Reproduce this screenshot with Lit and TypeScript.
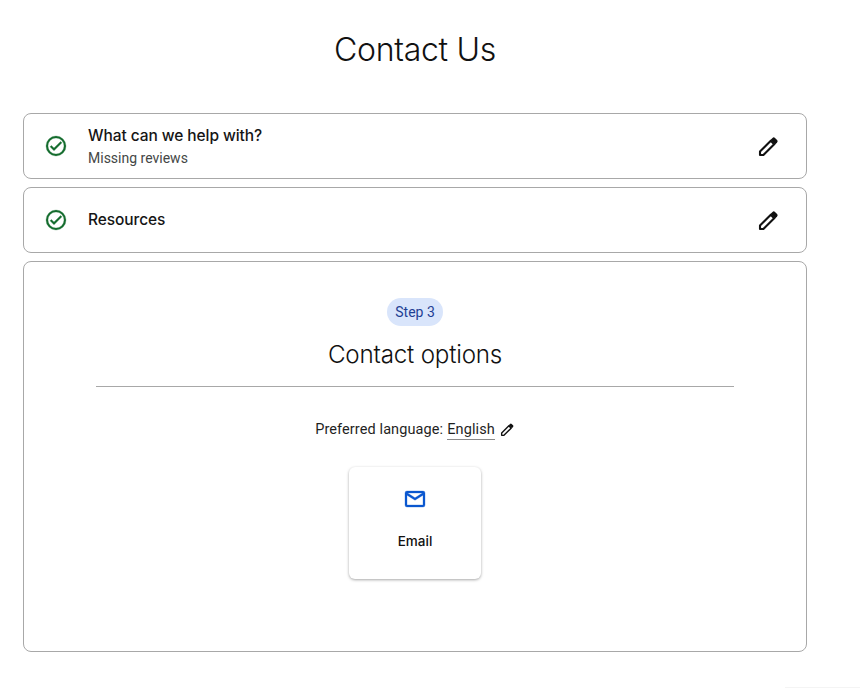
import { LitElement, html, css, svg } from "lit";
import { customElement } from "lit/decorators.js";

const check = svg`<path d="M12 2a10 10 0 1 0 0 20 10 10 0 0 0 0-20zm0 18a8 8 0 1 1 0-16 8 8 0 0 1 0 16zm4.6-12.6L10 14l-2.6-2.6L6 12.8l4 4 8-8z" fill="#146c2e" stroke="#146c2e" stroke-width=".25"/>`;
const pencil = svg`<path d="M4 20v-3.4L14.8 5.8l3.4 3.4L7.4 20z" fill="none" stroke="#111" stroke-width="2.1" stroke-linejoin="round"/><path d="M14.6 4.8l1.9-1.9a1.8 1.8 0 0 1 2.5 0l2.1 2.1a1.8 1.8 0 0 1 0 2.5L19.2 9.4z" fill="#111"/>`;
const mail = svg`<path d="M20 4H4a2 2 0 0 0-2 2v12a2 2 0 0 0 2 2h16a2 2 0 0 0 2-2V6a2 2 0 0 0-2-2zm0 14H4V8.2l8 5 8-5V18zm-8-7.2L4.6 6h14.8L12 10.8z" fill="#0b57d0" stroke="#0b57d0" stroke-width=".3"/>`;

@customElement("app-root")
export class AppRoot extends LitElement {
  static styles = css`
    :host { display: block; position: relative; width: 860px; height: 688px; background: #fff; font-family: Roboto, "Liberation Sans", sans-serif; color: #1f1f1f; overflow: hidden; }
    :host::after { content: ""; position: absolute; left: 785px; right: 0; bottom: 0; height: 1px; background: #f4f4f4; }
    .page { width: 784px; margin-left: 23px; display: flex; flex-direction: column; }
    h1 { margin: 0; height: 113px; padding-top: 31px; box-sizing: border-box; text-align: center; font-family: Inter, Roboto, sans-serif; font-weight: 300; font-size: 32px; line-height: 38px; letter-spacing: -0.3px; color: #111; }
    .card { border: 1px solid #a8a8a8; border-radius: 8px; box-sizing: border-box; }
    .row { height: 66px; margin-bottom: 8px; display: flex; align-items: center; padding: 0 26px 0 20px; }
    .row svg.ok { width: 24px; height: 24px; flex: none; }
    .row .text { flex: 1; margin-left: 20px; display: flex; flex-direction: column; }
    .row .text.two { padding-top: 1px; }
    .title { font-family: Inter, Roboto, sans-serif; font-size: 15.5px; font-weight: 500; line-height: 22px; letter-spacing: -0.08px; color: #151515; }
    .sub { font-size: 14px; line-height: 22px; color: #444746; }
    .row svg.edit { width: 24px; height: 24px; flex: none; margin-top: 2px; }
    .main { height: 391px; display: flex; flex-direction: column; align-items: center; padding-top: 36px; }
    .chip { height: 28px; padding: 0 8px; border-radius: 14px; background: #d9e5fb; color: #1f3f94; font-size: 14px; line-height: 28px; }
    h2 { margin: 11px 0 0; font-family: Inter, Roboto, sans-serif; font-weight: 300; font-size: 24.2px; line-height: 36px; letter-spacing: -0.2px; color: #111; }
    .rule { width: 638px; height: 1px; background: #a8a8a8; margin-top: 13px; }
    .lang { margin-top: 33px; display: flex; align-items: center; font-size: 14.5px; line-height: 20px; letter-spacing: 0.1px; }
    .lang u { text-decoration: none; border-bottom: 1px solid #8a8a8a; margin-left: 4px; line-height: 19px; }
    .lang svg { width: 16px; height: 16px; margin-left: 4px; }
    .tile { width: 132px; height: 112px; margin-top: 27px; border-radius: 6px; box-shadow: 0 1px 3px rgba(0,0,0,.35); display: flex; flex-direction: column; align-items: center; padding-top: 20px; box-sizing: border-box; }
    .tile svg { width: 24px; height: 24px; }
    .tile span { margin-top: 19px; font-family: Inter, Roboto, sans-serif; font-size: 13.5px; font-weight: 500; line-height: 22px; color: #111; }
  `;

  render() {
    return html`<div class="page">
      <h1>Contact Us</h1>
      <div class="card row">
        <svg class="ok" viewBox="0 0 24 24">${check}</svg>
        <div class="text two"><span class="title">What can we help with?</span><span class="sub">Missing reviews</span></div>
        <svg class="edit" viewBox="0 0 24 24">${pencil}</svg>
      </div>
      <div class="card row">
        <svg class="ok" viewBox="0 0 24 24">${check}</svg>
        <div class="text"><span class="title">Resources</span></div>
        <svg class="edit" viewBox="0 0 24 24">${pencil}</svg>
      </div>
      <div class="card main">
        <div class="chip">Step 3</div>
        <h2>Contact options</h2>
        <div class="rule"></div>
        <div class="lang">Preferred language: <u>English</u><svg viewBox="0 0 24 24">${pencil}</svg></div>
        <div class="tile"><svg viewBox="0 0 24 24">${mail}</svg><span>Email</span></div>
      </div>
    </div>`;
  }
}
